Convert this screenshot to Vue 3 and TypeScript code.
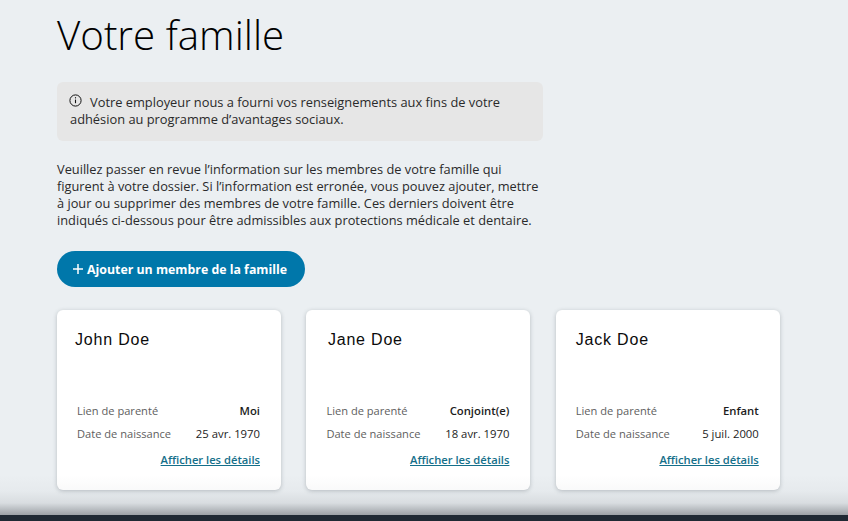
<script setup lang="ts">
interface Member { name: string; relation: string; birth: string; nameOffset: number }
const members: Member[] = [
  { name: 'John Doe', relation: 'Moi', birth: '25 avr. 1970', nameOffset: 0 },
  { name: 'Jane Doe', relation: 'Conjoint(e)', birth: '18 avr. 1970', nameOffset: 3.5 },
  { name: 'Jack Doe', relation: 'Enfant', birth: '5 juil. 2000', nameOffset: 2 },
]
</script>

<template>
  <div class="page">
    <main class="content">
      <h1 class="title">Votre famille</h1>
      <div class="notice">
        <svg class="info" width="13" height="13" viewBox="0 0 13 13" fill="none" stroke="#111" aria-hidden="true">
          <circle cx="6.5" cy="6.5" r="5.6" stroke-width="1" />
          <path d="M6.5 5.6v3.6" stroke-width="1.1" />
          <path d="M6.5 3.2v1.2" stroke-width="1.1" />
        </svg>
        <span class="notice-text">Votre employeur nous a fourni vos renseignements aux fins de votre adhésion au programme d’avantages sociaux.</span>
      </div>
      <p class="intro">Veuillez passer en revue l’information sur les membres de votre famille qui figurent à votre dossier. Si l’information est erronée, vous pouvez ajouter, mettre à jour ou supprimer des membres de votre famille. Ces derniers doivent être indiqués ci-dessous pour être admissibles aux protections médicale et dentaire.</p>
      <button class="add" type="button">
        <svg width="12" height="12" viewBox="0 0 12 12" stroke="#fff" stroke-width="1.5" aria-hidden="true">
          <path d="M6 1v10M1 6h10" />
        </svg>
        <span>Ajouter un membre de la famille</span>
      </button>
      <section class="cards">
        <article v-for="m in members" :key="m.name" class="card">
          <h2 class="name" :style="{ paddingLeft: m.nameOffset + 'px' }">{{ m.name }}</h2>
          <dl class="facts">
            <div class="row">
              <dt>Lien de parenté</dt>
              <dd class="strong">{{ m.relation }}</dd>
            </div>
            <div class="row">
              <dt>Date de naissance</dt>
              <dd>{{ m.birth }}</dd>
            </div>
          </dl>
          <a class="details" href="#">Afficher les détails</a>
        </article>
      </section>
    </main>
    <div class="fade"></div>
    <footer class="footer"></footer>
  </div>
</template>

<style>
html, body { margin: 0; background: #ebeff2; }
</style>

<style scoped>
.page {
  position: relative;
  width: 848px;
  height: 521px;
  overflow: hidden;
  background: #ebeff2;
  font-family: "Open Sans", sans-serif;
  color: #222;
}
.content {
  padding: 9px 0 0 57px;
}
.title {
  margin: 0;
  font-size: 40.3px;
  line-height: 52px;
  font-weight: 300;
  color: #000;
}
.notice {
  box-sizing: border-box;
  width: 486px;
  height: 59px;
  margin-top: 21px;
  padding: 12px 13px;
  background: #e6e6e6;
  border-radius: 6px;
  font-size: 12.85px;
  line-height: 17px;
  color: #2a2a2a;
}
.info {
  float: left;
  margin: 0 8px 0 -1px;
}
.intro {
  width: 486px;
  margin: 20px 0 0;
  font-size: 12.8px;
  line-height: 17px;
  color: #2a2a2a;
}
.add {
  display: flex;
  align-items: center;
  gap: 3px;
  width: 248px;
  height: 36px;
  margin-top: 22px;
  padding: 0 0 0 15px;
  border: 0;
  border-radius: 18px;
  background: #0077aa;
  color: #fff;
  font-family: "Open Sans", sans-serif;
  font-size: 12.35px;
  font-weight: 700;
}
.cards {
  display: flex;
  gap: 25.4px;
  margin-top: 23px;
}
.card {
  box-sizing: border-box;
  display: flex;
  flex-direction: column;
  width: 224px;
  height: 180px;
  padding: 20px 21px 0 18px;
  background: #fff;
  border-radius: 6px;
  box-shadow: 0 1px 4px rgba(60, 70, 80, 0.3);
}
.name {
  margin: 0;
  height: 73px;
  font-family: "Liberation Sans", Arial, sans-serif;
  font-size: 16px;
  line-height: 20px;
  font-weight: 400;
  letter-spacing: 0.8px;
  color: #0b0b0b;
}
.facts {
  margin: 0;
  padding-left: 2px;
}
.row {
  display: flex;
  justify-content: space-between;
  height: 23px;
  font-size: 11.1px;
  line-height: 15px;
}
dt {
  color: #5e5e5e;
}
dd {
  margin: 0;
  color: #1c1c1c;
  font-size: 11.3px;
  font-weight: 500;
}
dd.strong {
  font-weight: 600;
}
.details {
  align-self: flex-end;
  margin-top: 3px;
  font-size: 11.2px;
  line-height: 15px;
  font-weight: 600;
  color: #146f8a;
  text-decoration: underline;
}
.fade {
  position: absolute;
  left: 0;
  right: 0;
  bottom: 6px;
  height: 40px;
  background: linear-gradient(to bottom, rgba(150, 155, 160, 0) 0%, rgba(150, 155, 160, 0.06) 40%, rgba(150, 155, 160, 0.22) 70%, rgba(130, 135, 140, 0.75) 100%);
  pointer-events: none;
}
.footer {
  position: absolute;
  left: 0;
  right: 0;
  bottom: 0;
  height: 6px;
  background: #1f2933;
}
</style>
